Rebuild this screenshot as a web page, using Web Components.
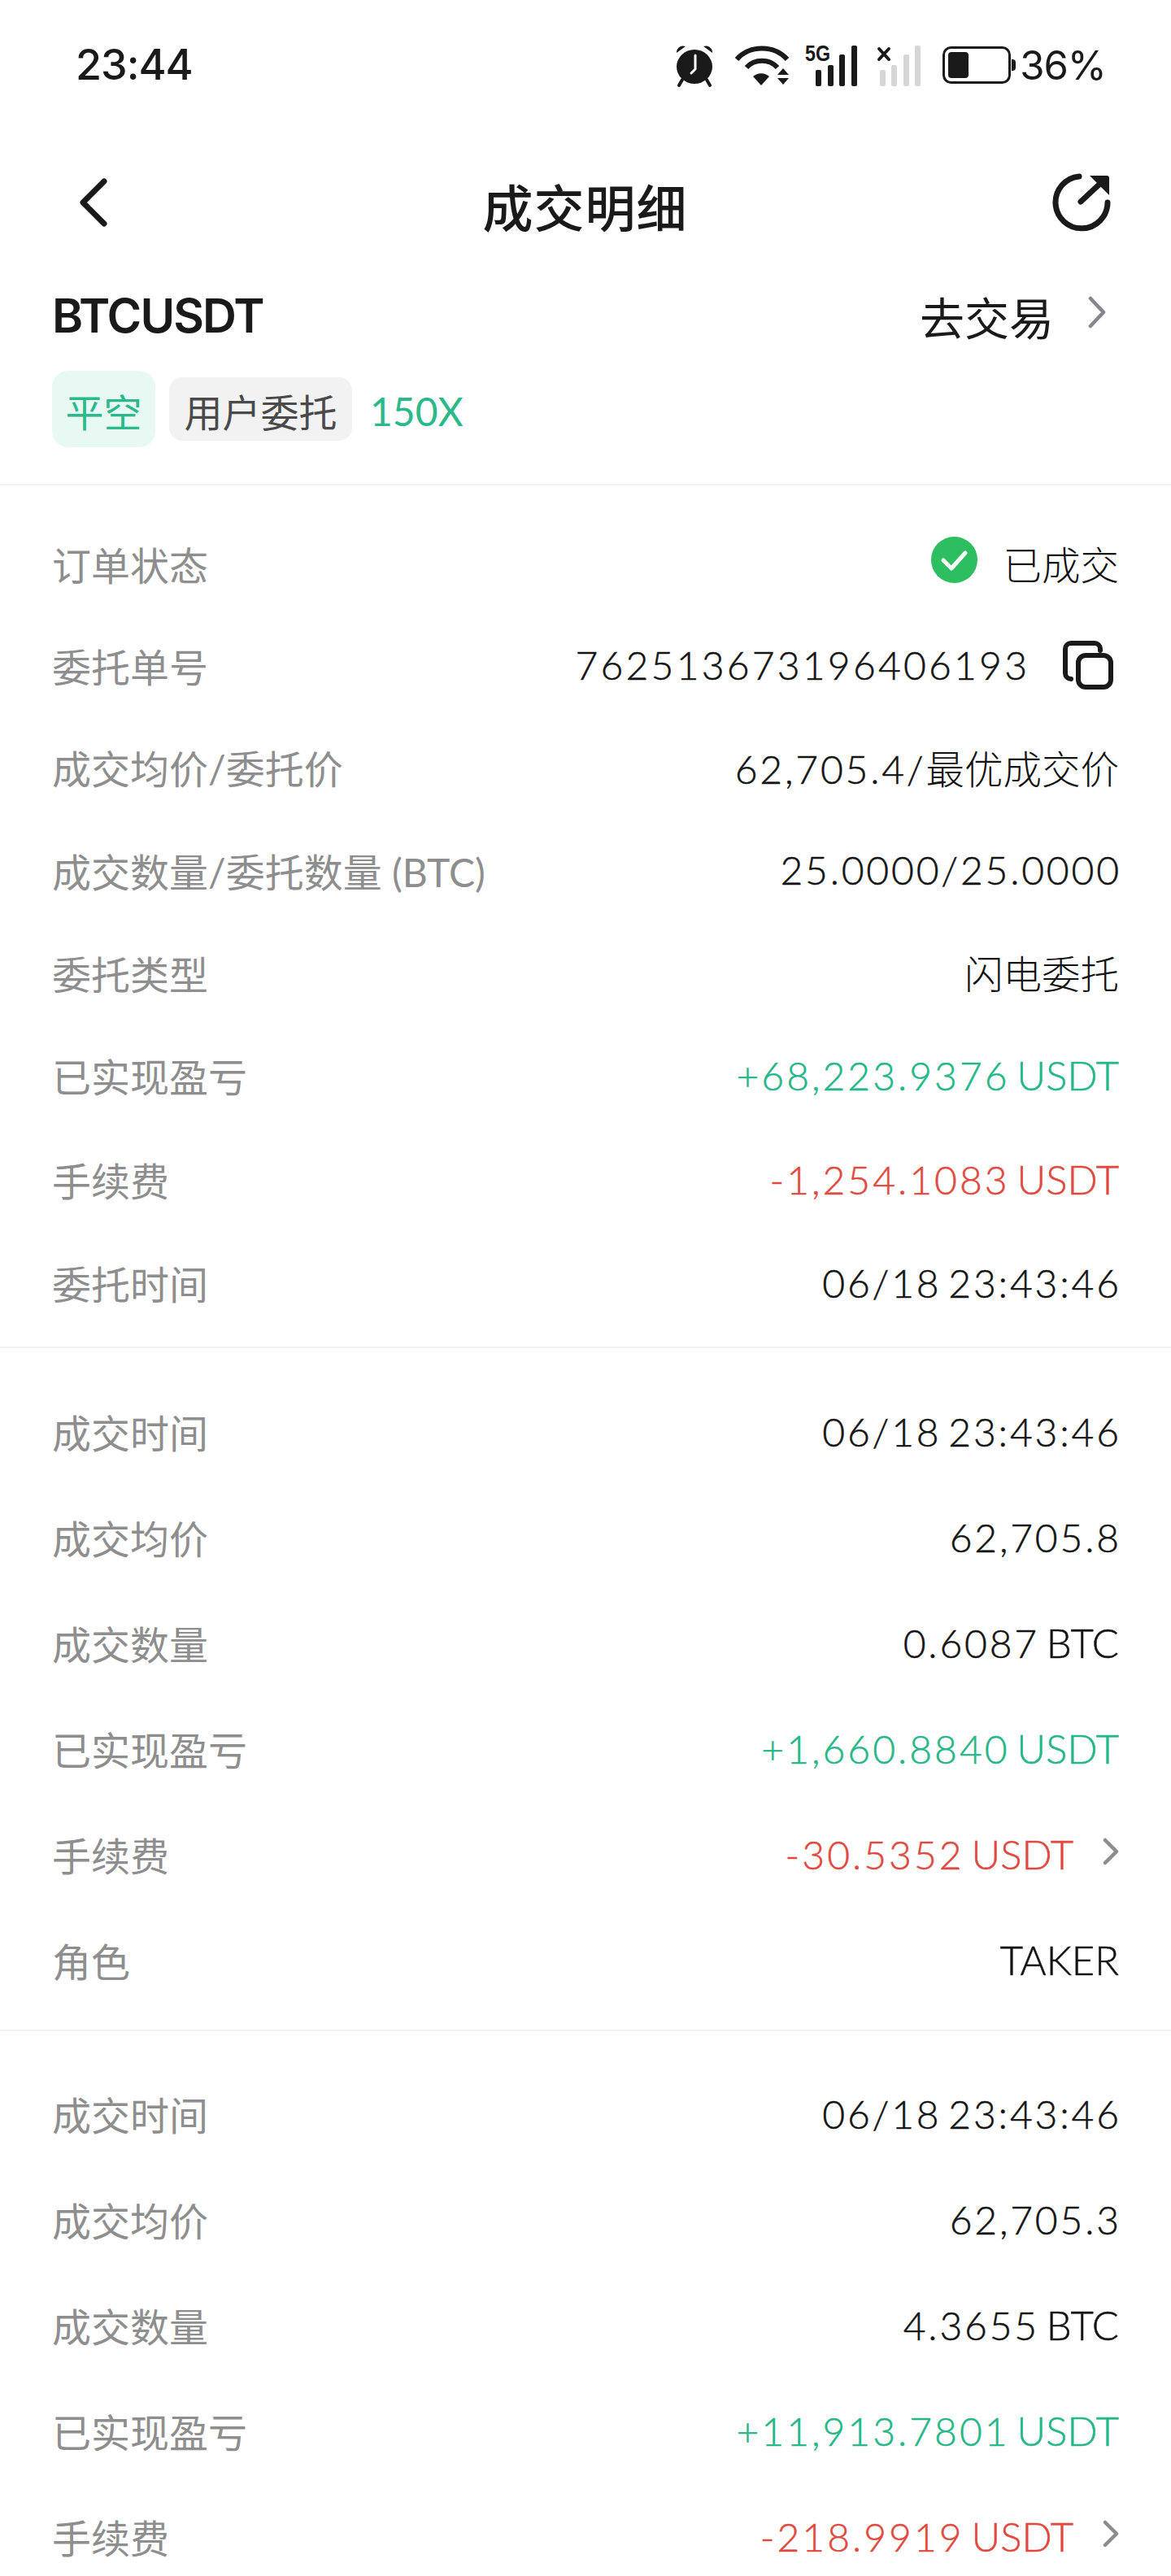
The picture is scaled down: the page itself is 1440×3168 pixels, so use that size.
<!DOCTYPE html>
<html lang="zh">
<head>
<meta charset="utf-8">
<title>成交明细</title>
<style>
html,body{margin:0;background:#fff}
body{width:1440px;height:3168px;overflow:hidden;font-family:"Lato","Noto Sans CJK SC",sans-serif;color:#1a1a1a}
</style>
</head>
<body>
<status-bar></status-bar>
<nav-bar heading="成交明细"></nav-bar>
<symbol-head name="BTCUSDT"></symbol-head>

<detail-section first>
  <detail-row label="订单状态" style="--h:125px"><check-icon slot="before"></check-icon><span class="c">已成交</span></detail-row>
  <detail-row label="委托单号" style="--h:125px;--ls:3.2px">762513673196406193<copy-icon slot="after"></copy-icon></detail-row>
  <detail-row label="成交均价/委托价" style="--h:126px">62,705.4/<span class="c">最优成交价</span></detail-row>
  <detail-row label="成交数量/委托数量 (BTC)" style="--h:127px">25.0000/25.0000</detail-row>
  <detail-row label="委托类型" style="--h:125px"><span class="c">闪电委托</span></detail-row>
  <detail-row label="已实现盈亏" tone="up" style="--h:128px">+68,223.9376 <span class="u">USDT</span></detail-row>
  <detail-row label="手续费" tone="down" style="--h:128px">-1,254.1083 <span class="u">USDT</span></detail-row>
  <detail-row label="委托时间" style="--h:126px">06/18 23:43:46</detail-row>
</detail-section>

<detail-section>
  <detail-row label="成交时间">06/18 23:43:46</detail-row>
  <detail-row label="成交均价">62,705.8</detail-row>
  <detail-row label="成交数量">0.6087 <span class="u">BTC</span></detail-row>
  <detail-row label="已实现盈亏" tone="up">+1,660.8840 <span class="u">USDT</span></detail-row>
  <detail-row label="手续费" tone="down" more>-30.5352 <span class="u">USDT</span></detail-row>
  <detail-row label="角色"><span class="u">TAKER</span></detail-row>
</detail-section>

<detail-section inset>
  <detail-row label="成交时间">06/18 23:43:46</detail-row>
  <detail-row label="成交均价">62,705.3</detail-row>
  <detail-row label="成交数量">4.3655 <span class="u">BTC</span></detail-row>
  <detail-row label="已实现盈亏" tone="up">+11,913.7801 <span class="u">USDT</span></detail-row>
  <detail-row label="手续费" tone="down" more>-218.9919 <span class="u">USDT</span></detail-row>
</detail-section>

<script>
const FONT = '"Lato","Noto Sans CJK SC",sans-serif'

class StatusBar extends HTMLElement {
  constructor() {
    super()
    this.attachShadow({ mode: 'open' })
    this.shadowRoot.innerHTML = `
    <style>
    :host{display:flex;align-items:center;height:160px;padding:0 80px 0 93px;font-family:${FONT};color:#1a1a1a}
    .time{font:500 52px/1 "Inter",sans-serif;letter-spacing:-1px;flex:1}
    .icons{display:flex;align-items:center}
    svg{display:block;overflow:visible}
    .pct{font:400 49px/1 "Inter",sans-serif;letter-spacing:-1px;margin-left:5px}
    </style>
    <span class="time">23:44</span>
    <div class="icons">
      <svg width="50" height="52" viewBox="0 0 50 52" style="margin-right:24px">
        <path d="M3 11a8 8 0 0 1 11-8zM47 11a8 8 0 0 0-11-8z" fill="#1a1a1a"/>
        <path d="M10 44l-4 7M40 44l4 7" stroke="#1a1a1a" stroke-width="4" stroke-linecap="round"/>
        <ellipse cx="25" cy="28" rx="22" ry="21" fill="#1a1a1a"/>
        <path d="M26 14v17l-5 5" fill="none" stroke="#fff" stroke-width="3" stroke-linecap="round" stroke-linejoin="round"/>
      </svg>
      <svg width="68" height="50" viewBox="0 0 68 50" style="margin-right:19px">
        <g fill="none" stroke="#1a1a1a" stroke-width="6">
          <path d="M3 18C19 0 49 0 65 18"/>
          <path d="M15 28C25 17 43 17 53 28"/>
        </g>
        <path d="M23 39a15 15 0 0 1 20 0L33 50z" fill="#1a1a1a"/>
        <path d="M60 29l7 8H53zM53 41h14l-7 8z" fill="#1a1a1a"/>
      </svg>
      <svg width="66" height="52" viewBox="0 0 66 52" style="margin-right:23px">
        <text x="0" y="21" font-family="Liberation Sans" font-weight="700" font-size="28" textLength="31" lengthAdjust="spacingAndGlyphs" fill="#1a1a1a">5G</text>
        <g fill="#1a1a1a">
          <rect x="13" y="32" width="7" height="20" rx="2"/><rect x="28" y="26" width="7" height="26" rx="2"/>
          <rect x="42" y="13" width="7" height="39" rx="2"/><rect x="57" y="2" width="7" height="50" rx="2"/>
        </g>
      </svg>
      <svg width="54" height="52" viewBox="0 0 54 52" style="margin-right:26px">
        <path d="M2 6l12 13M14 6L2 19" stroke="#1a1a1a" stroke-width="4" stroke-linecap="round"/>
        <g fill="#d6d6d6">
          <rect x="3" y="32" width="7" height="20" rx="2"/><rect x="17" y="26" width="7" height="26" rx="2"/>
          <rect x="32" y="13" width="7" height="39" rx="2"/><rect x="46" y="2" width="7" height="50" rx="2"/>
        </g>
      </svg>
      <svg width="90" height="46" viewBox="0 0 90 46">
        <rect x="1.5" y="1.5" width="81" height="43" rx="9" fill="none" stroke="#1a1a1a" stroke-width="3"/>
        <rect x="7" y="7" width="25" height="32" rx="4" fill="#1a1a1a"/>
        <path d="M85 16h1a4 4 0 0 1 4 4v6a4 4 0 0 1-4 4h-1z" fill="#1a1a1a"/>
      </svg>
      <span class="pct">36%</span>
    </div>`
  }
}

class NavBar extends HTMLElement {
  constructor() {
    super()
    this.attachShadow({ mode: 'open' })
  }

  connectedCallback() {
    this.shadowRoot.innerHTML = `
    <style>
    :host{display:flex;align-items:center;justify-content:space-between;height:186px;padding:0 73px 0 96px;font-family:${FONT}}
    h1{margin:0 0 0 12px;font:500 62px/1 "Noto Sans CJK SC",sans-serif;color:#1a1a1a;letter-spacing:1px}
    svg{display:block;margin-top:-8px}
    </style>
    <svg width="38" height="60" viewBox="0 0 38 60"><path d="M32 4L6 30l26 26" fill="none" stroke="#1a1a1a" stroke-width="7" stroke-linecap="round" stroke-linejoin="round"/></svg>
    <h1>${this.getAttribute('heading')}</h1>
    <svg width="74" height="74" viewBox="0 0 74 74">
      <path d="M34 5A32 32 0 1 0 69 37" fill="none" stroke="#1a1a1a" stroke-width="7" stroke-linecap="round"/>
      <path d="M36 36L66 8" fill="none" stroke="#1a1a1a" stroke-width="7" stroke-linecap="round"/>
      <path d="M47 4h21a3 3 0 0 1 3 3v21z" fill="#1a1a1a"/>
    </svg>`
  }
}

class SymbolHead extends HTMLElement {
  constructor() {
    super()
    this.attachShadow({ mode: 'open' })
  }

  connectedCallback() {
    this.shadowRoot.innerHTML = `
    <style>
    :host{display:block;padding:0 80px 0 64px;height:251px;box-sizing:border-box;border-bottom:2px solid #f3f3f3;font-family:${FONT}}
    .top{display:flex;align-items:center;justify-content:space-between;height:84px}
    .name{font:600 58px/1 "Inter",sans-serif;color:#1a1a1a;letter-spacing:-1.9px}
    .go{display:flex;align-items:center;font-size:55px;color:#1a1a1a;gap:42px}
    .tags{display:flex;align-items:center;gap:17px;margin-top:26px}
    .tag{border-radius:20px;display:flex;align-items:center;justify-content:center;font-size:47px;padding-top:2px;box-sizing:border-box}
    .short{width:127px;height:94px;background:#e7f9f2;color:#2bb98c}
    .kind{width:225px;height:78px;background:#f2f2f2;color:#4a4a4a;border-radius:16px}
    .lev{font-size:48px;color:#2bb98c;margin:4px 0 0 5px}
    svg{display:block;margin-top:-8px}
    </style>
    <div class="top">
      <span class="name">${this.getAttribute('name')}</span>
      <span class="go">去交易
        <svg width="22" height="40" viewBox="0 0 22 40"><path d="M3 3l16 17L3 37" fill="none" stroke="#85858d" stroke-width="4.5" stroke-linecap="round" stroke-linejoin="round"/></svg>
      </span>
    </div>
    <div class="tags">
      <span class="tag short">平空</span>
      <span class="tag kind">用户委托</span>
      <span class="lev">150X</span>
    </div>`
  }
}

class DetailSection extends HTMLElement {
  constructor() {
    super()
    this.attachShadow({ mode: 'open' })
    this.shadowRoot.innerHTML = `
    <style>
    :host{display:block;box-sizing:border-box;padding:37px 0 21px;border-bottom:2px solid #f3f3f3}
    :host([first]){padding:33px 0 16px}
    :host([inset]){border-bottom:0;padding-top:36px}
    </style>
    <slot></slot>`
  }
}

class DetailRow extends HTMLElement {
  constructor() {
    super()
    this.attachShadow({ mode: 'open' })
  }

  connectedCallback() {
    let label = this.getAttribute('label'),
      more = this.hasAttribute('more')

    this.shadowRoot.innerHTML = `
    <style>
    :host{--ls:2.8px;display:flex;align-items:center;justify-content:space-between;height:var(--h,130px);padding:0 64px;font-family:${FONT};font-size:48px}
    :host([tone]){--ls:3px}
    .label{color:#8e8e8e}
    .value{display:flex;align-items:center;color:#141414;white-space:nowrap;letter-spacing:var(--ls);font-weight:300;word-spacing:-7px;-webkit-text-stroke:.5px currentColor}
    .text{margin-right:calc(var(--ls) * -1)}
    :host([tone=up]) .value{color:#25b789}
    :host([tone=down]) .value{color:#e04a40}
    ::slotted(.u){letter-spacing:0;font-size:49px;margin-right:var(--ls)}
    ::slotted(.c){letter-spacing:0;font-size:47.5px;font-weight:300;-webkit-text-stroke:0;margin-right:var(--ls)}
    .chev{display:block;margin:-6px 0 0 36px}
    </style>
    <span class="label">${label}</span>
    <span class="value"><slot name="before"></slot><span class="text"><slot></slot></span><slot name="after"></slot>${more ? '<svg class="chev" width="20" height="34" viewBox="0 0 20 34"><path d="M3 3l14 14L3 31" fill="none" stroke="#8c8c8c" stroke-width="4.5" stroke-linecap="round" stroke-linejoin="round"/></svg>' : ''}</span>`
  }
}

class CheckIcon extends HTMLElement {
  constructor() {
    super()
    this.attachShadow({ mode: 'open' })
    this.shadowRoot.innerHTML = `
    <style>:host{display:block;margin:-8px 32px 0 0}svg{display:block}</style>
    <svg width="57" height="57" viewBox="0 0 57 57"><circle cx="28.5" cy="28.5" r="28.5" fill="#2cbe5f"/><path d="M15 29l10 10 17-19" fill="none" stroke="#fff" stroke-width="5" stroke-linecap="round" stroke-linejoin="round"/></svg>`
  }
}

class CopyIcon extends HTMLElement {
  constructor() {
    super()
    this.attachShadow({ mode: 'open' })
    this.shadowRoot.innerHTML = `
    <style>:host{display:block;margin:0 7px 0 44px}svg{display:block}</style>
    <svg width="62" height="60" viewBox="0 0 62 60" fill="none" stroke="#1a1a1a" stroke-width="6" stroke-linecap="round">
      <path d="M46 12V10a7 7 0 0 0-7-7H10a7 7 0 0 0-7 7v30a7 7 0 0 0 7 7"/>
      <rect x="19" y="18" width="40" height="39" rx="9"/>
    </svg>`
  }
}

customElements.define('status-bar', StatusBar)
customElements.define('nav-bar', NavBar)
customElements.define('symbol-head', SymbolHead)
customElements.define('detail-section', DetailSection)
customElements.define('detail-row', DetailRow)
customElements.define('check-icon', CheckIcon)
customElements.define('copy-icon', CopyIcon)
</script>
</body>
</html>
